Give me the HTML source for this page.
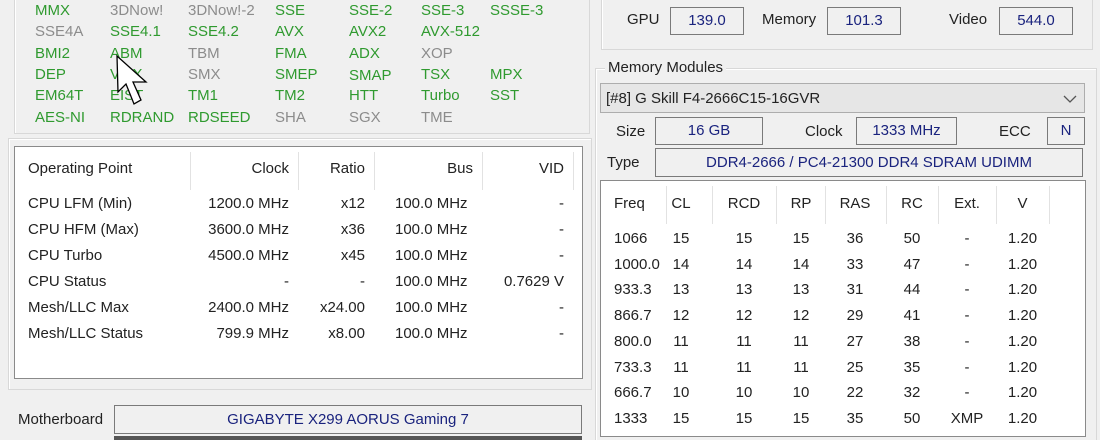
<!DOCTYPE html>
<html><head><meta charset="utf-8"><style>
html,body{margin:0;width:1100px;height:440px;overflow:hidden}
body{background:#f0f0f0;position:relative;font-family:"Liberation Sans",sans-serif;font-size:15px;color:#222}
.a{position:absolute;white-space:nowrap}
.g{color:#2f9a2f}.x{color:#8c8c8c}
.gb{position:absolute;border:1px solid #d8d8d8;box-shadow:inset 1px 1px 0 #fff}
.box{position:absolute;border:1px solid #7a7a7a;background:#f0f0f0;color:#1a237e;text-align:center;box-sizing:border-box}
.tb{position:absolute;border:1px solid #8a8a8a;background:#fff}
.sep{position:absolute;width:1px;background:#e2e2e2}
.r{text-align:right}
</style></head><body>
<div class="gb" style="left:14px;top:-2px;width:574px;height:134px"></div>
<div class="a g" style="left:35px;top:2px">MMX</div><div class="a x" style="left:110px;top:2px">3DNow!</div><div class="a x" style="left:188px;top:2px">3DNow!-2</div><div class="a g" style="left:275px;top:2px">SSE</div><div class="a g" style="left:349px;top:2px">SSE-2</div><div class="a g" style="left:421px;top:2px">SSE-3</div><div class="a g" style="left:490px;top:2px">SSSE-3</div>
<div class="a x" style="left:35px;top:23px">SSE4A</div><div class="a g" style="left:110px;top:23px">SSE4.1</div><div class="a g" style="left:188px;top:23px">SSE4.2</div><div class="a g" style="left:275px;top:23px">AVX</div><div class="a g" style="left:349px;top:23px">AVX2</div><div class="a g" style="left:421px;top:23px">AVX-512</div>
<div class="a g" style="left:35px;top:45px">BMI2</div><div class="a g" style="left:110px;top:45px">ABM</div><div class="a x" style="left:188px;top:45px">TBM</div><div class="a g" style="left:275px;top:45px">FMA</div><div class="a g" style="left:349px;top:45px">ADX</div><div class="a x" style="left:421px;top:45px">XOP</div>
<div class="a g" style="left:35px;top:66px">DEP</div><div class="a g" style="left:110px;top:66px">VMX</div><div class="a x" style="left:188px;top:66px">SMX</div><div class="a g" style="left:275px;top:66px">SMEP</div><div class="a g" style="left:349px;top:67px">SMAP</div><div class="a g" style="left:421px;top:66px">TSX</div><div class="a g" style="left:490px;top:66px">MPX</div>
<div class="a g" style="left:35px;top:87px">EM64T</div><div class="a g" style="left:110px;top:87px">EIST</div><div class="a g" style="left:188px;top:87px">TM1</div><div class="a g" style="left:275px;top:87px">TM2</div><div class="a g" style="left:349px;top:87px">HTT</div><div class="a g" style="left:421px;top:87px">Turbo</div><div class="a g" style="left:490px;top:87px">SST</div>
<div class="a g" style="left:35px;top:109px">AES-NI</div><div class="a g" style="left:110px;top:109px">RDRAND</div><div class="a g" style="left:188px;top:109px">RDSEED</div><div class="a x" style="left:275px;top:109px">SHA</div><div class="a x" style="left:349px;top:109px">SGX</div><div class="a x" style="left:421px;top:109px">TME</div>
<svg class="a" style="left:110px;top:52px" width="45" height="65"><path d="M7 4 L8 40 L16 32 L24 52 L31 48 L23 30 L36 30 Z" fill="#fff" stroke="#000" stroke-width="1.3"/></svg>
<div class="gb" style="left:8px;top:138px;width:582px;height:250px"></div>
<div class="tb" style="left:14px;top:146px;width:567px;height:231px"></div>
<div class="sep" style="left:190px;top:152px;height:38px"></div><div class="sep" style="left:298px;top:152px;height:38px"></div><div class="sep" style="left:374px;top:152px;height:38px"></div><div class="sep" style="left:482px;top:152px;height:38px"></div><div class="sep" style="left:573px;top:152px;height:38px"></div>
<div class="a" style="left:28px;top:160px">Operating Point</div><div class="a r" style="left:190px;width:99px;top:160px">Clock</div><div class="a r" style="left:298px;width:67px;top:160px">Ratio</div><div class="a r" style="left:374px;width:99px;top:160px">Bus</div><div class="a r" style="left:482px;width:82px;top:160px">VID</div>
<div class="a" style="left:28px;top:191px;line-height:26px">CPU LFM (Min)<br>CPU HFM (Max)<br>CPU Turbo<br>CPU Status<br>Mesh/LLC Max<br>Mesh/LLC Status</div>
<div class="a r" style="left:190px;width:99px;top:191px;line-height:26px">1200.0 MHz<br>3600.0 MHz<br>4500.0 MHz<br>-<br>2400.0 MHz<br>799.9 MHz</div>
<div class="a r" style="left:298px;width:67px;top:191px;line-height:26px">x12<br>x36<br>x45<br>-<br>x24.00<br>x8.00</div>
<div class="a" style="left:395px;top:191px;line-height:26px">100.0 MHz<br>100.0 MHz<br>100.0 MHz<br>100.0 MHz<br>100.0 MHz<br>100.0 MHz</div>
<div class="a r" style="left:482px;width:82px;top:191px;line-height:26px">-<br>-<br>-<br>0.7629 V<br>-<br>-</div>
<div class="a" style="left:18px;top:411px">Motherboard</div>
<div class="box" style="left:114px;top:405px;width:468px;height:29px;line-height:27px">GIGABYTE X299 AORUS Gaming 7</div>
<div style="position:absolute;left:114px;top:436px;width:468px;height:4px;background:#555"></div>
<div class="gb" style="left:601px;top:-2px;width:490px;height:50px"></div>
<div class="a" style="left:627px;top:11px">GPU</div><div class="box" style="left:670px;top:7px;width:74px;height:28px;line-height:26px">139.0</div>
<div class="a" style="left:762px;top:11px">Memory</div><div class="box" style="left:827px;top:7px;width:74px;height:28px;line-height:26px">101.3</div>
<div class="a" style="left:949px;top:11px">Video</div><div class="box" style="left:999px;top:7px;width:74px;height:28px;line-height:26px">544.0</div>
<div class="gb" style="left:595px;top:68px;width:500px;height:380px"></div>
<div class="a" style="left:605px;top:59px;background:#f0f0f0;padding:0 3px">Memory Modules</div>
<div style="position:absolute;left:600px;top:83px;width:485px;height:30px;background:#e6e6e6;border:1px solid #adadad;box-sizing:border-box"></div>
<div class="a" style="left:606px;top:90px">[#8] G Skill F4-2666C15-16GVR</div>
<svg class="a" style="left:1063px;top:95px" width="14" height="8"><path d="M1 1 L7 7 L13 1" fill="none" stroke="#555" stroke-width="1.3"/></svg>
<div class="a" style="left:616px;top:123px">Size</div><div class="box" style="left:655px;top:117px;width:108px;height:28px;line-height:26px">16 GB</div>
<div class="a" style="left:805px;top:123px">Clock</div><div class="box" style="left:856px;top:117px;width:101px;height:28px;line-height:26px">1333 MHz</div>
<div class="a" style="left:999px;top:123px">ECC</div><div class="box" style="left:1047px;top:117px;width:38px;height:28px;line-height:26px">N</div>
<div class="a" style="left:607px;top:154px">Type</div><div class="box" style="left:655px;top:148px;width:428px;height:29px;line-height:27px">DDR4-2666 / PC4-21300 DDR4 SDRAM UDIMM</div>
<div class="tb" style="left:600px;top:180px;width:484px;height:255px"></div>
<div class="sep" style="left:666px;top:186px;height:38px"></div><div class="sep" style="left:712px;top:186px;height:38px"></div><div class="sep" style="left:776px;top:186px;height:38px"></div><div class="sep" style="left:825px;top:186px;height:38px"></div><div class="sep" style="left:886px;top:186px;height:38px"></div><div class="sep" style="left:938px;top:186px;height:38px"></div><div class="sep" style="left:996px;top:186px;height:38px"></div><div class="sep" style="left:1049px;top:186px;height:38px"></div>
<div class="a" style="left:614px;top:195px">Freq</div>
<div class="a" style="left:614px;top:226px;line-height:25.7px">1066<br>1000.0<br>933.3<br>866.7<br>800.0<br>733.3<br>666.7<br>1333</div>
<div class="a" style="left:666px;width:30px;text-align:center;top:195px">CL</div>
<div class="a" style="left:666px;width:30px;text-align:center;top:226px;line-height:25.7px">15<br>14<br>13<br>12<br>11<br>11<br>10<br>15</div>
<div class="a" style="left:719px;width:50px;text-align:center;top:195px">RCD</div>
<div class="a" style="left:719px;width:50px;text-align:center;top:226px;line-height:25.7px">15<br>14<br>13<br>12<br>11<br>11<br>10<br>15</div>
<div class="a" style="left:781px;width:40px;text-align:center;top:195px">RP</div>
<div class="a" style="left:781px;width:40px;text-align:center;top:226px;line-height:25.7px">15<br>14<br>13<br>12<br>11<br>11<br>10<br>15</div>
<div class="a" style="left:830px;width:50px;text-align:center;top:195px">RAS</div>
<div class="a" style="left:830px;width:50px;text-align:center;top:226px;line-height:25.7px">36<br>33<br>31<br>29<br>27<br>25<br>22<br>35</div>
<div class="a" style="left:892px;width:40px;text-align:center;top:195px">RC</div>
<div class="a" style="left:892px;width:40px;text-align:center;top:226px;line-height:25.7px">50<br>47<br>44<br>41<br>38<br>35<br>32<br>50</div>
<div class="a" style="left:942px;width:50px;text-align:center;top:195px">Ext.</div>
<div class="a" style="left:942px;width:50px;text-align:center;top:226px;line-height:25.7px">-<br>-<br>-<br>-<br>-<br>-<br>-<br>XMP</div>
<div class="a" style="left:1000px;width:45px;text-align:center;top:195px">V</div>
<div class="a" style="left:1000px;width:45px;text-align:center;top:226px;line-height:25.7px">1.20<br>1.20<br>1.20<br>1.20<br>1.20<br>1.20<br>1.20<br>1.20</div>
</body></html>
